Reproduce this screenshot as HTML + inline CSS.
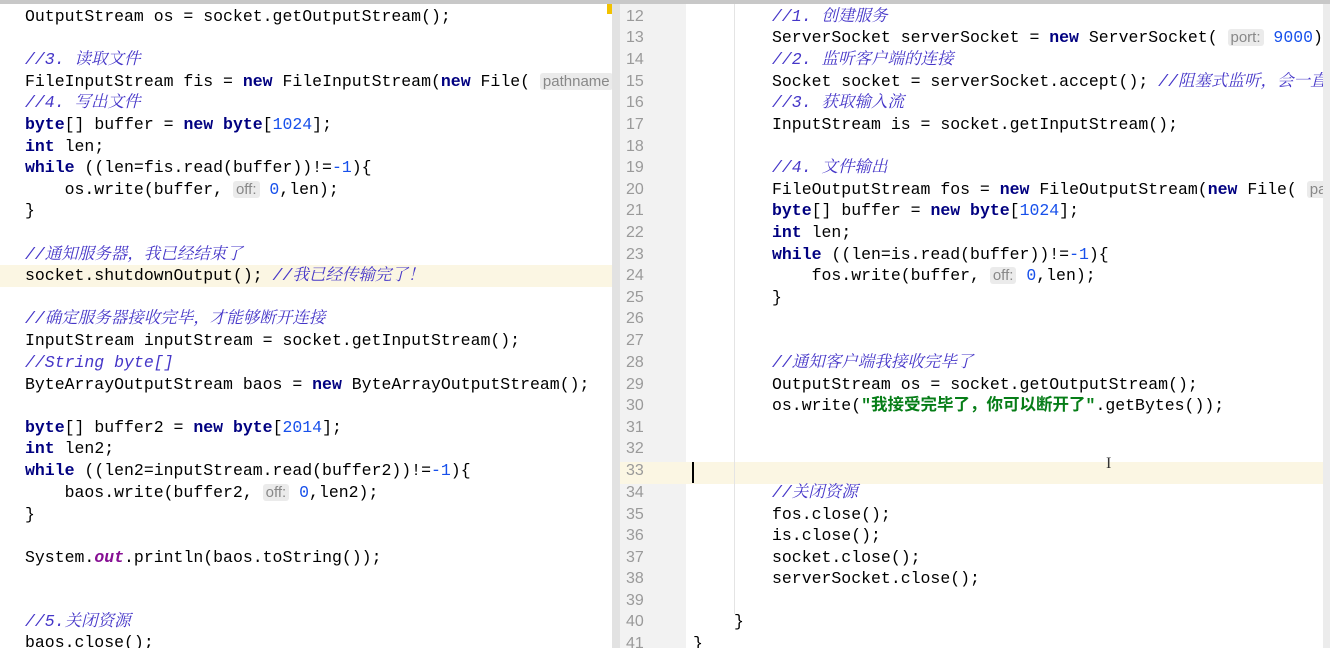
<!DOCTYPE html>
<html><head><meta charset="utf-8"><style>
body{margin:0;width:1330px;height:648px;overflow:hidden;background:#fff;position:relative;font-family:"Liberation Mono","Noto Sans CJK SC",monospace;font-size:16.5px;color:#000}
.l{position:absolute;height:22px;line-height:22px;white-space:pre}
.k{color:#000080;font-weight:bold}
.c{color:#4536c8;font-style:italic;font-family:"Liberation Mono","Noto Serif CJK SC",serif}
.n{color:#1750eb}
.s{color:#067d17;font-weight:bold}
.h{background:#ebebeb;color:#888;font-family:"Liberation Sans",sans-serif;font-size:15px;padding:0 3px;border-radius:3px}
.o{color:#871094;font-style:italic;font-weight:bold}
.ln{position:absolute;left:626px;color:#9a9a9a;font-size:16px;height:22px;line-height:22px;font-family:"Liberation Sans",sans-serif}
#left{position:absolute;left:0;top:0;width:612px;height:648px;overflow:hidden}
#right{position:absolute;left:686px;top:0;width:637px;height:648px;overflow:hidden}
</style></head><body>
<div style="position:absolute;left:0;top:0;width:1330px;height:4px;background:#c8c8c8"></div>
<div style="position:absolute;left:0;top:265px;width:612px;height:22px;background:#fbf6e3"></div>
<div id="left">
<div class="l c" style="left:25px;top:-17px">//2. 获取输出流</div>
<div class="l" style="left:25px;top:6px">OutputStream os = socket.getOutputStream();</div>
<div class="l c" style="left:25px;top:49px">//3. 读取文件</div>
<div class="l" style="left:25px;top:71px">FileInputStream fis = <span class="k">new</span> FileInputStream(<span class="k">new</span> File( <span class="h">pathname</span></div>
<div class="l c" style="left:25px;top:92px">//4. 写出文件</div>
<div class="l" style="left:25px;top:114px"><span class="k">byte</span>[] buffer = <span class="k">new byte</span>[<span class="n">1024</span>];</div>
<div class="l" style="left:25px;top:136px"><span class="k">int</span> len;</div>
<div class="l" style="left:25px;top:157px"><span class="k">while</span> ((len=fis.read(buffer))!=<span class="n">-1</span>){</div>
<div class="l" style="left:25px;top:179px">    os.write(buffer, <span class="h">off:</span> <span class="n">0</span>,len);</div>
<div class="l" style="left:25px;top:200px">}</div>
<div class="l c" style="left:25px;top:244px">//通知服务器，我已经结束了</div>
<div class="l" style="left:25px;top:265px">socket.shutdownOutput(); <span class="c">//我已经传输完了！</span></div>
<div class="l c" style="left:25px;top:308px">//确定服务器接收完毕，才能够断开连接</div>
<div class="l" style="left:25px;top:330px">InputStream inputStream = socket.getInputStream();</div>
<div class="l c" style="left:25px;top:352px">//String byte[]</div>
<div class="l" style="left:25px;top:374px">ByteArrayOutputStream baos = <span class="k">new</span> ByteArrayOutputStream();</div>
<div class="l" style="left:25px;top:417px"><span class="k">byte</span>[] buffer2 = <span class="k">new byte</span>[<span class="n">2014</span>];</div>
<div class="l" style="left:25px;top:438px"><span class="k">int</span> len2;</div>
<div class="l" style="left:25px;top:460px"><span class="k">while</span> ((len2=inputStream.read(buffer2))!=<span class="n">-1</span>){</div>
<div class="l" style="left:25px;top:482px">    baos.write(buffer2, <span class="h">off:</span> <span class="n">0</span>,len2);</div>
<div class="l" style="left:25px;top:504px">}</div>
<div class="l" style="left:25px;top:547px">System.<span class="o">out</span>.println(baos.toString());</div>
<div class="l c" style="left:25px;top:611px">//5.关闭资源</div>
<div class="l" style="left:25px;top:632px">baos.close();</div>
</div>
<div style="position:absolute;left:607px;top:4px;width:8px;height:10px;background:#f2c200"></div>
<div style="position:absolute;left:612px;top:4px;width:8px;height:644px;background:#e2e2e2"></div>
<div style="position:absolute;left:620px;top:4px;width:66px;height:644px;background:#f2f2f2"></div>
<div style="position:absolute;left:620px;top:462px;width:710px;height:22px;background:#fbf6e3"></div>
<div class="ln" style="top:6px">12</div><div class="ln" style="top:27px">13</div><div class="ln" style="top:49px">14</div><div class="ln" style="top:71px">15</div><div class="ln" style="top:92px">16</div><div class="ln" style="top:114px">17</div><div class="ln" style="top:136px">18</div><div class="ln" style="top:157px">19</div><div class="ln" style="top:179px">20</div><div class="ln" style="top:200px">21</div><div class="ln" style="top:222px">22</div><div class="ln" style="top:244px">23</div><div class="ln" style="top:265px">24</div><div class="ln" style="top:287px">25</div><div class="ln" style="top:308px">26</div><div class="ln" style="top:330px">27</div><div class="ln" style="top:352px">28</div><div class="ln" style="top:374px">29</div><div class="ln" style="top:395px">30</div><div class="ln" style="top:417px">31</div><div class="ln" style="top:438px">32</div><div class="ln" style="top:460px">33</div><div class="ln" style="top:482px">34</div><div class="ln" style="top:504px">35</div><div class="ln" style="top:525px">36</div><div class="ln" style="top:547px">37</div><div class="ln" style="top:568px">38</div><div class="ln" style="top:590px">39</div><div class="ln" style="top:611px">40</div><div class="ln" style="top:633px">41</div>
<div style="position:absolute;left:734px;top:4px;width:1px;height:610px;background:#e4e4e4"></div>
<div style="position:absolute;left:692px;top:462px;width:2px;height:21px;background:#000"></div>
<div id="right">
<div class="l c" style="left:86px;top:6px">//1. 创建服务</div>
<div class="l" style="left:86px;top:27px">ServerSocket serverSocket = <span class="k">new</span> ServerSocket( <span class="h">port:</span> <span class="n">9000</span>);</div>
<div class="l c" style="left:86px;top:49px">//2. 监听客户端的连接</div>
<div class="l" style="left:86px;top:71px">Socket socket = serverSocket.accept(); <span class="c">//阻塞式监听，会一直</span></div>
<div class="l c" style="left:86px;top:92px">//3. 获取输入流</div>
<div class="l" style="left:86px;top:114px">InputStream is = socket.getInputStream();</div>
<div class="l c" style="left:86px;top:157px">//4. 文件输出</div>
<div class="l" style="left:86px;top:179px">FileOutputStream fos = <span class="k">new</span> FileOutputStream(<span class="k">new</span> File( <span class="h">pa</span></div>
<div class="l" style="left:86px;top:200px"><span class="k">byte</span>[] buffer = <span class="k">new byte</span>[<span class="n">1024</span>];</div>
<div class="l" style="left:86px;top:222px"><span class="k">int</span> len;</div>
<div class="l" style="left:86px;top:244px"><span class="k">while</span> ((len=is.read(buffer))!=<span class="n">-1</span>){</div>
<div class="l" style="left:86px;top:265px">    fos.write(buffer, <span class="h">off:</span> <span class="n">0</span>,len);</div>
<div class="l" style="left:86px;top:287px">}</div>
<div class="l c" style="left:86px;top:352px">//通知客户端我接收完毕了</div>
<div class="l" style="left:86px;top:374px">OutputStream os = socket.getOutputStream();</div>
<div class="l" style="left:86px;top:395px">os.write(<span class="s">"我接受完毕了，你可以断开了"</span>.getBytes());</div>
<div class="l c" style="left:86px;top:482px">//关闭资源</div>
<div class="l" style="left:86px;top:504px">fos.close();</div>
<div class="l" style="left:86px;top:525px">is.close();</div>
<div class="l" style="left:86px;top:547px">socket.close();</div>
<div class="l" style="left:86px;top:568px">serverSocket.close();</div>
<div class="l" style="left:48px;top:611px">}</div>
<div class="l" style="left:7px;top:633px">}</div>
</div>
<div style="position:absolute;left:1106px;top:455px;color:#333;font-size:16px;font-family:'Liberation Serif',serif">I</div>
<div style="position:absolute;left:1323px;top:4px;width:7px;height:644px;background:#ececec"></div>
</body></html>
